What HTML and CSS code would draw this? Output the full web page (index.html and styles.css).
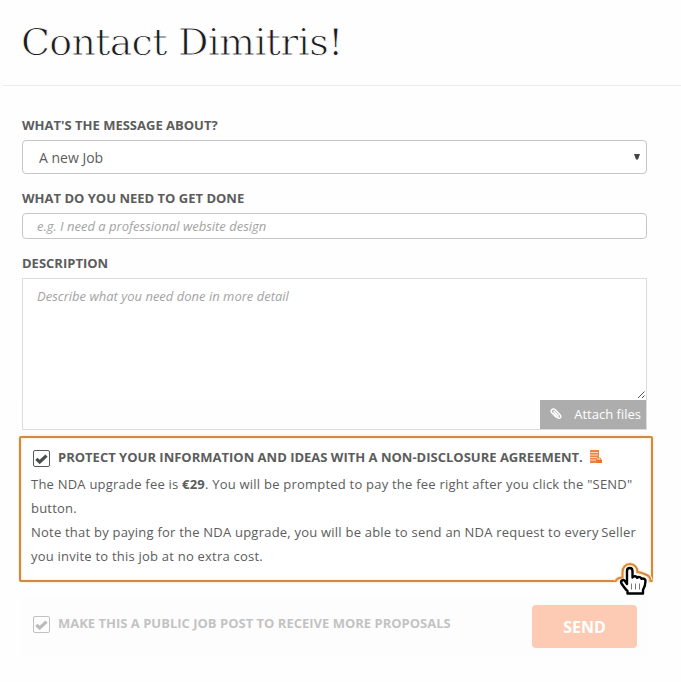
FILE: index.html
```html
<!DOCTYPE html>
<html lang="en">
<head>
  <meta charset="UTF-8">
  <title>Contact Dimitris!</title>
  <link rel="stylesheet" href="styles.css">
</head>
<body>
  <header>
    <h1>Contact Dimitris!</h1>
  </header>

  <form class="contact">
    <label class="label about-label" for="about">What's the message about?</label>
    <div class="select">
      <select id="about">
        <option>A new Job</option>
      </select>
      <svg class="arrow" width="6" height="6" viewBox="0 0 6 6"><path d="M0 0h6L4 5.500H2z" fill="#444"/></svg>
    </div>

    <label class="label need-label" for="need">What do you need to get done</label>
    <input class="text-input" id="need" type="text" placeholder="e.g. I need a professional website design">

    <label class="label desc-label" for="description">Description</label>
    <div class="description">
      <textarea id="description" placeholder="Describe what you need done in more detail"></textarea>
      <svg class="grip" width="9" height="9" viewBox="0 0 9 9"><path d="M1 8L7.500 1.500M5 8L7.500 5.500" stroke="#555" stroke-width="1" fill="none"/></svg>
      <button type="button" class="attach">
        <svg width="12" height="12" viewBox="0 0 12 12" fill="none" stroke="#fff" stroke-width="1.500" stroke-linecap="round"><path d="M3.200 5.200l4 4.200c1 1 2 1.200 3 .4.900-.9.700-2-.2-3L5.200 1.800C4.200.8 2.900.7 1.900 1.600S.9 3.900 1.800 4.800l3.800 4M4 3.600l4.200 4.500"/></svg>
        <span>Attach files</span>
      </button>
    </div>

    <section class="nda">
      <div class="nda-title">
        <span class="check"><svg width="13" height="11" viewBox="0 0 13 11"><path d="M1.300 5.800L4.700 9 11.500 2.600" fill="none" stroke="#4b4c4e" stroke-width="3.200"/></svg></span>
        <strong>Protect your information and ideas with a Non-Disclosure Agreement.</strong>
        <svg class="doc" width="13" height="14" viewBox="0 0 13 14">
          <path d="M0 0h9v8H7v5H0z" fill="#ee8443"/>
          <path d="M0 2.500h8M0 5h8M0 7.500h7M0 10h6" stroke="#fde3cf" stroke-width=".9"/>
          <path d="M6.500 9.500H12V13H6.500z" fill="#e9722e"/>
          <path d="M8 9.500V8h2.500v1.500" fill="none" stroke="#f08a4b"/>
        </svg>
      </div>
      <p>The NDA upgrade fee is <b>€29</b>. You will be prompted to pay the fee right after you click the "SEND"<br>button.</p>
      <p>Note that by paying for the NDA upgrade, you will be able to send an NDA request to every<span class="seller"> Seller</span><br>you invite to this job at no extra cost.</p>
      <svg class="hand" width="50" height="45" viewBox="0 0 50 45">
        <path d="M12 29c0-3 3-5 6-5v-5c0-4 3-7 7-7s7 3 7 7c4 0 7 2 8 3 3 1 4 3 4 7z" fill="#fff"/>
        <path d="M10.500 26c1.500-2.500 4-3.500 7-3.500V17c0-4.500 3-8 7.500-8s7.500 3.500 7.500 8c4 .3 6 1.500 8 2.500 3.500 1 5 3.500 5 6.500h2" fill="none" stroke="#fdebc5" stroke-width="4"/>
        <path d="M10.500 26c1.500-2.500 4-3.500 7-3.500V17c0-4.500 3-8 7.500-8s7.500 3.500 7.500 8c4 .3 6 1.500 8 2.500 3.500 1 5 3.500 5 6.500h2" fill="none" stroke="#d7873f" stroke-width="2"/>
        <path d="M22 29V16c0-4 5.500-4 5.500 0v6.500c1-2 4.300-1.500 4.500.3 1.500-1.300 4.300-.8 4.500 1 2-.8 4 .2 4 2.200 0 4-.8 6-2.500 9v3.500H22.500V36c-2-1.500-4-4.500-6-7.500-1.500-3 2-4.500 3.500-2.500z" fill="#fff" stroke="#000" stroke-width="2.400" stroke-linejoin="round"/>
        <path d="M26.500 28.500v6M30.500 28.500v6M34.500 28.500v6" stroke="#777" stroke-width="1"/>
      </svg>
    </section>

    <footer>
      <span class="check"><svg width="13" height="11" viewBox="0 0 13 11"><path d="M1.300 5.800L4.700 9 11.500 2.600" fill="none" stroke="#4b4c4e" stroke-width="3.200"/></svg></span>
      <strong>Make this a public job post to receive more proposals</strong>
      <button type="button" class="send">SEND</button>
    </footer>
  </form>
</body>
</html>
```
FILE: styles.css
```css
*, *::before, *::after {box-sizing: border-box; margin: 0}
body {
  background: #fefefe;
  color: #5c5c5c;
  font-family: 'Open Sans', sans-serif;
  font-size: 14px;
}
header {
  height: 86px;
  margin-left: 3px;
  padding: 18px 0 0 18px;
  border-bottom: 1px solid #ebebeb;
}
h1 {
  color: #1c1c1c;
  font-family: 'DejaVu Serif', serif;
  font-size: 38px;
  font-weight: 400;
  line-height: 48px;
  letter-spacing: -.75px;
  white-space: nowrap;
  /* background-coloured stroke keeps the letters thin */
  -webkit-text-stroke: .9px #fefefe;
}
.contact {
  width: 625px;
  margin-left: 22px;
}
.label {
  display: block;
  font-size: 13px;
  font-weight: 700;
  line-height: 18px;
  text-transform: uppercase;
}
.about-label {padding-top: 30px; margin-bottom: 6px}
.need-label {margin: 15px 0 6px}
.desc-label {margin: 15px 0 6px}
.select {
  position: relative;
  height: 34px;
}
select, .text-input, textarea {
  display: block;
  width: 100%;
  color: #5c5c5c;
  font-family: inherit;
  background: #fff;
  border: 1px solid #c6c6c6;
  border-radius: 4px;
  outline: none;
}
select {
  appearance: none;
  height: 34px;
  padding: 0 16px;
  font-size: 14px;
}
.arrow {
  position: absolute;
  right: 7px;
  top: 14px;
}
.text-input {
  height: 26px;
  padding: 0 14px;
  font-size: 13px;
}
::placeholder {
  color: #a3a3a3;
  font-style: italic;
  opacity: 1;
}
.description {
  position: relative;
  height: 152px;
  border: 1px solid #dcdcdc;
}
textarea {
  height: 121px;
  padding: 8px 14px;
  font-size: 13px;
  border: 0;
  border-radius: 0;
  resize: none;
}
.grip {
  position: absolute;
  right: 0;
  top: 111px;
}
.attach {
  display: flex;
  align-items: center;
  justify-content: space-between;
  width: 106px;
  height: 29px;
  margin-left: auto;
  padding: 0 5px 2px 10px;
  color: #fff;
  font-family: inherit;
  font-size: 13px;
  background: #adadad;
  border: 0;
}
.nda {
  position: relative;
  width: 634px;
  height: 146px;
  margin: 6px 0 0 -3px;
  padding: 10px 10px 0;
  background: #fff;
  border: 2px solid #d7873f;
  border-radius: 2px;
  box-shadow: 0 0 2px #f8d58e, inset 0 0 2px #f8d58e;
}
.nda-title {
  display: flex;
  align-items: center;
  height: 24px;
  padding: 0 0 6px 2px;
  white-space: nowrap;
}
.nda-title .check {margin-top: 3px}
strong {
  font-size: 13px;
  text-transform: uppercase;
}
.check {
  display: grid;
  place-items: center;
  width: 17px;
  height: 17px;
  margin-right: 8px;
  background: #fff;
  border: 1px solid #58595b;
  border-radius: 2px;
}
.doc {margin-left: 7px}
.nda p {
  font-size: 13px;
  line-height: 24px;
  letter-spacing: .22px;
  white-space: nowrap;
}
.seller {word-spacing: -1px}
.hand {
  position: absolute;
  left: 584px;
  top: 117px;
}
footer {
  display: flex;
  align-items: center;
  height: 61px;
  margin-top: 13px;
  padding: 2px 10px 0 11px;
  background: #fdfdfd;
}
footer .check, footer strong {
  opacity: .36;
  margin-bottom: 5px;
}
footer strong {margin-bottom: 7px}
.send {
  width: 105px;
  height: 43px;
  margin-left: auto;
  color: #fff;
  font-family: inherit;
  font-size: 16px;
  font-weight: 700;
  background: #fdcbb4;
  border: 0;
  border-radius: 4px;
}
```
